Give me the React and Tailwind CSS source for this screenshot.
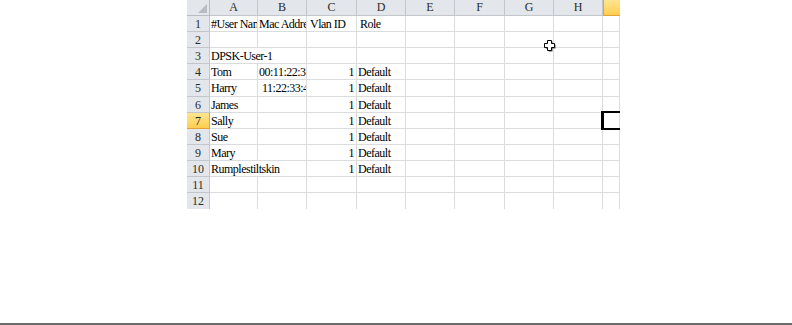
import React from 'react';

const colLetters = ['A', 'B', 'C', 'D', 'E', 'F', 'G', 'H', ''];

// each row: [A, B, C, D], extra cells empty. overflow flag lets text run into next empty cell
const rows = [
    { h: 'h-[16px]', cells: [{ t: '#User Nam' }, { t: 'Mac Addre' }, { t: 'Vlan ID', pl: 'pl-[3px]' }, { t: 'Role', pl: 'pl-[3px]' }] },
    { h: 'h-[16px]', cells: [] },
    { h: 'h-[16px]', cells: [{ t: 'DPSK-User-1', over: true }] },
    { h: 'h-[16px]', cells: [{ t: 'Tom' }, { t: '00:11:22:3' }, { t: '1', right: true }, { t: 'Default' }] },
    { h: 'h-[17px]', cells: [{ t: 'Harry' }, { t: '11:22:33:4', pl: 'pl-[4px]' }, { t: '1', right: true }, { t: 'Default' }] },
    { h: 'h-[16px]', cells: [{ t: 'James' }, null, { t: '1', right: true }, { t: 'Default' }] },
    { h: 'h-[16px]', cells: [{ t: 'Sally' }, null, { t: '1', right: true }, { t: 'Default' }], sel: true },
    { h: 'h-[16px]', cells: [{ t: 'Sue' }, null, { t: '1', right: true }, { t: 'Default' }] },
    { h: 'h-[16px]', cells: [{ t: 'Mary' }, null, { t: '1', right: true }, { t: 'Default' }] },
    { h: 'h-[16px]', cells: [{ t: 'Rumplestiltskin', over: true }, null, { t: '1', right: true }, { t: 'Default' }] },
    { h: 'h-[16px]', cells: [] },
    { h: 'h-[17px]', cells: [] },
    { h: 'h-[16px]', cells: [] },
];

const widths = ['w-[48px]', 'w-[49px]', 'w-[50px]', 'w-[49px]', 'w-[49px]', 'w-[50px]', 'w-[49px]', 'w-[49px]', 'w-[17px]'];

function Cursor() {
    return (
        <svg className="absolute left-[544px] top-[40px]" width="12" height="12" viewBox="0 0 12 12">
            <path d="M4.5 1.5H8.5V4.5H11.5V8.5H8.5V11.5H4.5V8.5H1.5V4.5H4.5Z" fill="#555" />
            <path d="M3.5 .5H7.5V3.5H10.5V7.5H7.5V10.5H3.5V7.5H.5V3.5H3.5Z" fill="#fff" stroke="#000" strokeWidth="1" />
        </svg>
    );
}

export default function App() {
    return (
        <div className="relative w-[792px] h-[325px] bg-white flex flex-col font-serif text-[12px] tracking-[-0.5px] text-black">
            <div className="ml-[187px] w-[433px] h-[209px] overflow-hidden flex flex-col [font-family:Liberation_Serif,serif]">
                {/* column headers */}
                <div className="flex h-[16px] shrink-0">
                    <div className="w-[23px] border-r border-b border-[#b9bdc3] bg-[#e3e6ea] relative">
                        <svg className="absolute right-[2px] bottom-[2px]" width="9" height="9" viewBox="0 0 9 9">
                            <path d="M9 0V9H0Z" fill="#b8bcc2" />
                        </svg>
                    </div>
                    {colLetters.map((l, i) =>
                        i === 8 ? (
                            <div key={i} className={`${widths[i]} border-l border-b border-[#e2a33b] bg-gradient-to-b from-[#ffe58e] to-[#ffcd4f]`} />
                        ) : (
                            <div key={i} className={`${widths[i]} border-r border-b border-[#c3c7cc] bg-[#e3e6ea] text-center leading-[15px] text-[#2c2c2c] tracking-normal`}>
                                {l}
                            </div>
                        )
                    )}
                </div>

                {rows.map((r, ri) => (
                    <div key={ri} className={`flex ${r.h} shrink-0`}>
                        <div className={`w-[23px] border-r border-b text-center leading-[16px] tracking-normal ${r.sel ? 'bg-gradient-to-b from-[#ffe58e] to-[#ffcd4f] border-[#e2a33b] text-[#222]' : 'bg-[#e3e6ea] border-[#c3c7cc] text-[#2c2c2c]'}`}>
                            {ri + 1}
                        </div>
                        {widths.map((w, ci) => {
                            const c = r.cells[ci];
                            const noRight = c && c.over;
                            const visible = (c && c.over) || ci === 8;
                            return (
                                <div
                                    key={ci}
                                    className={`${w} relative border-b border-[#dadcdd] ${noRight ? '' : 'border-r'} ${visible ? 'overflow-visible' : 'overflow-hidden'} whitespace-nowrap leading-[16px]`}
                                >
                                    {c && (
                                        <div className={`relative z-10 ${c.right ? 'text-right pr-[2px]' : c.pl || 'pl-[1px]'}`}>{c.t}</div>
                                    )}
                                    {r.sel && ci === 8 && (
                                        <div className="absolute left-[-2px] top-[-2px] w-[40px] h-[19px] border-l-[3px] border-y-2 border-black z-20" />
                                    )}
                                </div>
                            );
                        })}
                    </div>
                ))}
            </div>
            <div className="flex-1" />
            <div className="h-[2px] bg-[#6b6b6b]" />
            <Cursor />
        </div>
    );
}
